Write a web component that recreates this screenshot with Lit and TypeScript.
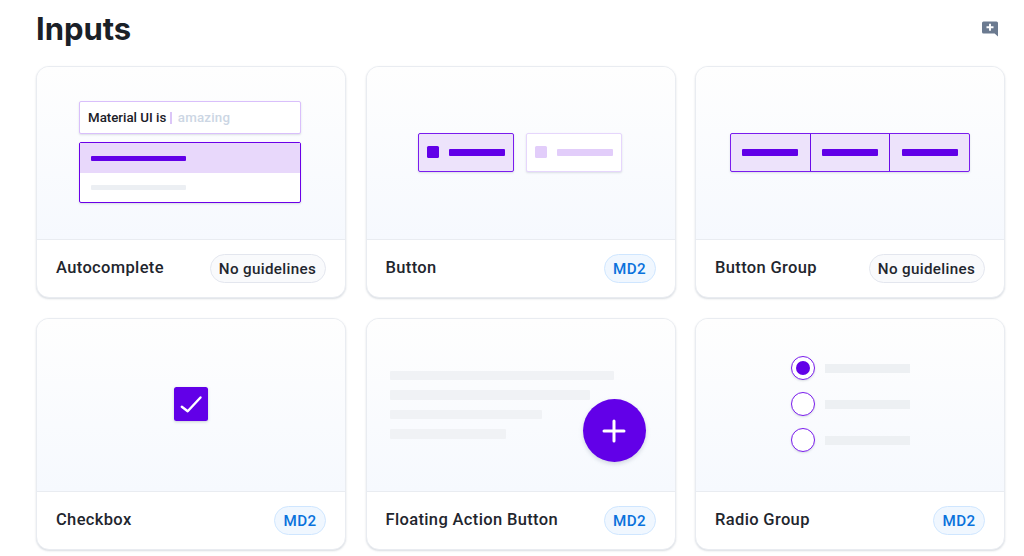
import { LitElement, html, css } from "lit";
import { customElement } from "lit/decorators.js";

const cards = [
  { name: "Autocomplete", chip: "No guidelines", kind: "auto" },
  { name: "Button", chip: "MD2", kind: "button" },
  { name: "Button Group", chip: "No guidelines", kind: "group" },
  { name: "Checkbox", chip: "MD2", kind: "check" },
  { name: "Floating Action Button", chip: "MD2", kind: "fab" },
  { name: "Radio Group", chip: "MD2", kind: "radio" },
];

@customElement("app-root")
export class AppRoot extends LitElement {
  static styles = css`
    :host {
      display: block;
      width: 1024px;
      height: 556px;
      overflow: hidden;
      background: #fff;
      font-family: "Inter", "Liberation Sans", sans-serif;
      color: #1f262e;
      box-sizing: border-box;
    }
    .page { padding: 8px 19px 0 36px; }
    .head { display: flex; justify-content: space-between; align-items: center; height: 42px; margin-bottom: 16px; }
    h1 { margin: 0; font-size: 31px; line-height: 42px; font-weight: 700; letter-spacing: -0.05px; color: #1a2027; }
    .link { width: 20px; height: 20px; display: block; margin-right: 5px; }
    .grid { display: grid; grid-template-columns: repeat(3, 310px); column-gap: 19.5px; row-gap: 20px; }
    .card {
      height: 232px; box-sizing: border-box; border: 1.5px solid #e9ecf1; border-radius: 13px;
      overflow: hidden; background: #fff; box-shadow: 0 1px 2px rgba(170,180,190,.45);
      display: flex; flex-direction: column;
    }
    .preview {
      height: 170.5px; padding-bottom: 1px; flex: none; position: relative; display: flex; align-items: center; justify-content: center;
      background: linear-gradient(#fefefe, #f6f9fe); border-bottom: 1.5px solid #e9ecf1; box-sizing: content-box;
    }
    .foot { flex: 1; display: flex; align-items: center; justify-content: space-between; padding: 0 19.5px 0 19px; }
    .name { font-family: "Roboto", sans-serif; font-size: 16.5px; font-weight: 500; letter-spacing: .35px; color: #1f262e; margin-bottom: 2px; }
    .chip {
      height: 29px; width: 116px; box-sizing: border-box; border-radius: 15px; display: flex; align-items: center; justify-content: center; padding-top: 2px;
      font-family: "Roboto", sans-serif; font-size: 15.2px; font-weight: 500; letter-spacing: .35px;
      border: 1.5px solid #e3e6ee; background: #f9fafc; color: #1f262e;
    }
    .chip.md2 { width: 52px; margin-right: -0.5px; border-color: #cfe6ff; background: #f0f7ff; color: #0a72dc; letter-spacing: .4px; }

    .auto { width: 222px; display: flex; flex-direction: column; gap: 8px; margin-left: -2px; }
    .input {
      height: 33px; box-sizing: border-box; border: 1.75px solid #d9bffb; border-radius: 2px; background: #fff;
      display: flex; align-items: center; padding-left: 8px; font-family: "Roboto", sans-serif;
      font-size: 13.3px; font-weight: 500; box-shadow: 0 1px 2px rgba(170,180,190,.4); color: #1a2027;
    }
    .caret { width: 2px; height: 12px; background: #dcc6f8; margin: 0 6px 0 3.5px; }
    .hint { color: #ccd6e4; font-weight: 500; letter-spacing: .2px; }
    .list { height: 61px; box-sizing: border-box; border: 1.75px solid #6b00e8; border-radius: 2px; background: #fff; display: flex; flex-direction: column; box-shadow: 0 1px 2px rgba(170,180,190,.4); }
    .opt { flex: 1; display: flex; align-items: center; padding-left: 10.5px; }
    .opt.on { background: #e8d8fb; }
    .line { width: 95px; height: 5px; border-radius: 1px; background: #eceff3; }
    .opt.on .line { background: #6200e8; }

    .btns { display: flex; gap: 12px; margin-left: -1px; }
    .btn {
      width: 96px; height: 39px; box-sizing: border-box; border: 1.75px solid #7a1cee; border-radius: 2px;
      background: #ede3fb; display: flex; align-items: center; gap: 9.5px; padding-left: 8px;
      box-shadow: 0 1px 2px rgba(170,180,190,.4);
    }
    .sq { width: 12px; height: 12px; border-radius: 1.5px; background: #6200e8; }
    .bar { width: 56px; height: 7.5px; border-radius: 1px; background: #6200e8; }
    .btn.off { border-color: #e6d6fc; background: #fff; }
    .off .sq, .off .bar { background: #e2cdfa; }

    .group {
      display: flex; width: 240px; height: 39px; box-sizing: border-box; border: 1.75px solid #7a1cee; border-radius: 2px;
      background: #ede3fb; box-shadow: 0 1px 2px rgba(170,180,190,.4);
    }
    .seg { flex: 1; display: flex; align-items: center; justify-content: center; }
    .seg + .seg { border-left: 1.75px solid #6a0ae8; }

    .checkbox { width: 34px; height: 34px; border-radius: 2.5px; background: #6200e8; display: flex; align-items: center; justify-content: center; box-shadow: 0 1px 3px rgba(170,180,190,.6); }

    .lines { position: absolute; left: 23px; top: 51.5px; display: flex; flex-direction: column; gap: 10px; }
    .lines div { height: 9.5px; background: #f0f2f5; border-radius: 1px; }
    .w1 { width: 224px; } .w2 { width: 200px; } .w3 { width: 152px; } .w4 { width: 116px; }
    .fab { position: absolute; left: 216px; top: 80px; width: 63px; height: 63px; border-radius: 50%; background: #6200e8; display: flex; align-items: center; justify-content: center; box-shadow: 0 2px 4px rgba(150,160,180,.4); }

    .radios { display: flex; flex-direction: column; gap: 12px; margin-top: 0; }
    .rrow { display: flex; align-items: center; gap: 10px; }
    .r { width: 24px; height: 24px; box-sizing: border-box; border: 1.75px solid #7a1cee; border-radius: 50%; background: #fff; display: flex; align-items: center; justify-content: center; box-shadow: 0 1px 2px rgba(170,180,190,.4); }
    .dot { width: 14px; height: 14px; border-radius: 50%; background: #6200e8; }
    .rbar { width: 85px; height: 9.5px; background: #edf0f3; }
  `;

  preview(kind: string) {
    switch (kind) {
      case "auto":
        return html`<div class="auto">
          <div class="input">Material UI is<span class="caret"></span><span class="hint">amazing</span></div>
          <div class="list">
            <div class="opt on"><div class="line"></div></div>
            <div class="opt"><div class="line"></div></div>
          </div>
        </div>`;
      case "button":
        return html`<div class="btns">
          <div class="btn"><div class="sq"></div><div class="bar"></div></div>
          <div class="btn off"><div class="sq"></div><div class="bar"></div></div>
        </div>`;
      case "group":
        return html`<div class="group">
          <div class="seg"><div class="bar"></div></div>
          <div class="seg"><div class="bar"></div></div>
          <div class="seg"><div class="bar"></div></div>
        </div>`;
      case "check":
        return html`<div class="checkbox">
          <svg width="24" height="24" viewBox="0 0 24 24" fill="none" stroke="#fff" stroke-width="2.4" stroke-linecap="round" stroke-linejoin="round"><path d="M2.8 14.8L8.7 19.3L21.5 5.5"/></svg>
        </div>`;
      case "fab":
        return html`<div class="lines"><div class="w1"></div><div class="w2"></div><div class="w3"></div><div class="w4"></div></div>
          <div class="fab">
            <svg width="24" height="24" viewBox="0 0 24 24" fill="none" stroke="#fff" stroke-width="3" stroke-linecap="round"><path d="M12 2v20M2 12h20"/></svg>
          </div>`;
      default:
        return html`<div class="radios">
          <div class="rrow"><div class="r"><div class="dot"></div></div><div class="rbar"></div></div>
          <div class="rrow"><div class="r"></div><div class="rbar"></div></div>
          <div class="rrow"><div class="r"></div><div class="rbar"></div></div>
        </div>`;
    }
  }

  render() {
    return html`<div class="page">
      <div class="head">
        <h1>Inputs</h1>
        <svg class="link" viewBox="0 0 20 20"><path fill="#6b7a90" d="M3.5 2.5h13A1.5 1.5 0 0 1 18 4v13.5l-3.4-2.9H3.5A1.5 1.5 0 0 1 2 13.1V4a1.5 1.5 0 0 1 1.5-1.5z"/><path stroke="#fff" stroke-width="1.9" d="M10 4.8v7M6.5 8.3h7" fill="none"/></svg>
      </div>
      <div class="grid">
        ${cards.map((c) => html`<div class="card">
          <div class="preview">${this.preview(c.kind)}</div>
          <div class="foot">
            <span class="name">${c.name}</span>
            <span class="chip ${c.chip === "MD2" ? "md2" : ""}">${c.chip}</span>
          </div>
        </div>`)}
      </div>
    </div>`;
  }
}
